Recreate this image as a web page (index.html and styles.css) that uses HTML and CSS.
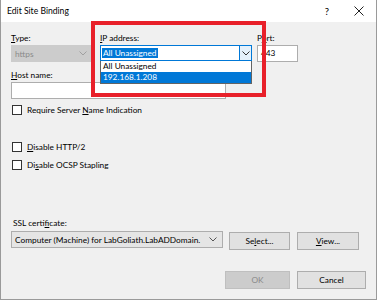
FILE: index.html
```html
<!DOCTYPE html>
<html lang="en">
<head>
    <meta charset="UTF-8">
    <title>Edit Site Binding</title>
    <link rel="stylesheet" href="styles.css">
</head>
<body>
<div class="dialog">
    <div class="titlebar">
        <span class="title">Edit Site Binding</span>
        <span class="help">?</span>
        <span class="close">
            <svg width="10" height="10" viewBox="0 0 10 10"><path d="M0.5 0.5 L9.5 9.5 M9.5 0.5 L0.5 9.5" stroke="#222" stroke-width="1" fill="none"/></svg>
        </span>
    </div>

    <div class="content">
        <div class="top-row">
            <div class="field type-field">
                <label><u>T</u>ype:</label>
                <div class="combo disabled">
                    <span class="combo-text">https</span>
                    <svg class="chev" width="8" height="5" viewBox="0 0 8 5"><path d="M0.5 0.5 L4 4 L7.5 0.5" stroke="#a0a0a0" fill="none"/></svg>
                </div>
            </div>
            <div class="field ip-field">
                <label><u>I</u>P address:</label>
                <div class="combo focused">
                    <span class="combo-text"><span class="selected-text">All Unassigned</span></span>
                    <span class="drop-btn">
                        <svg width="8" height="5" viewBox="0 0 8 5"><path d="M0.5 0.5 L4 4 L7.5 0.5" stroke="#333" fill="none"/></svg>
                    </span>
                </div>
                <div class="droplist">
                    <div class="drop-item">All Unassigned</div>
                    <div class="drop-item active">192.168.1.208</div>
                </div>
            </div>
            <div class="field port-field">
                <label>P<u>o</u>rt:</label>
                <div class="textbox">443</div>
            </div>
        </div>

        <div class="field host-field">
            <label><u>H</u>ost name:</label>
            <div class="textbox"></div>
        </div>

        <div class="check-row sni">
            <span class="checkbox"></span>
            <span>Require Server <u>N</u>ame Indication</span>
        </div>
        <div class="check-row http2">
            <span class="checkbox"></span>
            <span><u>D</u>isable HTTP/2</span>
        </div>
        <div class="check-row ocsp">
            <span class="checkbox"></span>
            <span>Di<u>s</u>able OCSP Stapling</span>
        </div>

        <label class="ssl-label">SSL certi<u>f</u>icate:</label>
        <div class="ssl-row">
            <div class="combo ssl-combo">
                <span class="combo-text">Computer (Machine) for LabGoliath.LabADDomain.</span>
                <svg class="chev" width="8" height="5" viewBox="0 0 8 5"><path d="M0.5 0.5 L4 4 L7.5 0.5" stroke="#555" fill="none"/></svg>
            </div>
            <button class="btn select-btn">Se<u>l</u>ect...</button>
            <button class="btn view-btn"><u>V</u>iew...</button>
        </div>

        <div class="footer">
            <button class="btn ok-btn" disabled>OK</button>
            <button class="btn cancel-btn">Cancel</button>
        </div>
    </div>

    <div class="highlight"></div>
</div>
</body>
</html>
```

FILE: styles.css
```css
body {
    margin: 0;
    font-family: Lato, "Noto Sans", sans-serif;
    font-size: 8.3px;
    color: #000;
    background-color: #fff;
}

.dialog {
    position: relative;
    width: 377px;
    height: 300px;
    box-sizing: border-box;
    background-color: #f0f0f0;
    border-left: 1px solid #9a9a9a;
    border-right: 1px solid #9a9a9a;
    border-bottom: 1px solid #9a9a9a;
    overflow: hidden;
}

.titlebar {
    display: flex;
    align-items: center;
    height: 22px;
    background-color: #fff;
    padding-left: 6px;
}

.title {
    flex: 1;
    font-size: 8.6px;
}

.help {
    width: 34px;
    text-align: center;
    font-size: 9.5px;
}

.close {
    display: flex;
    justify-content: center;
    width: 30px;
    margin-right: 2px;
}

.content {
    padding: 10px 10px 0 10px;
}

label {
    display: block;
    line-height: 12px;
    height: 12px;
}

u {
    text-decoration-thickness: 1px;
    text-underline-offset: 1px;
}

.top-row {
    display: flex;
}

.field label {
    margin-bottom: 1px;
}

.type-field {
    width: 82px;
    margin-right: 7px;
}

.ip-field {
    position: relative;
    width: 152px;
    margin-right: 5px;
}

.port-field {
    width: 41px;
}

.combo {
    display: flex;
    align-items: center;
    height: 17px;
    box-sizing: border-box;
    border: 1px solid #adadad;
    background-color: #e5e5e5;
}

.combo-text {
    flex: 1;
    padding-left: 3px;
    white-space: nowrap;
    overflow: hidden;
}

.chev {
    margin: 0 5px 0 3px;
}

.combo.disabled {
    background-color: #cccccc;
    border-color: #cccccc;
    color: #8a8a8a;
}

.combo.focused {
    background-color: #fff;
    border-color: #0078d7;
    height: 16px;
}

.selected-text {
    background-color: #0078d7;
    color: #fff;
    padding: 0 1px;
    margin-left: -2px;
}

.drop-btn {
    display: flex;
    align-items: center;
    justify-content: center;
    width: 11px;
    height: 100%;
    background-color: #e5f1fb;
    border-left: 1px solid #0078d7;
}

.droplist {
    position: absolute;
    left: 0;
    top: 29px;
    width: 152px;
    box-sizing: border-box;
    background-color: #fff;
    border: 1px solid #646464;
    border-top: none;
    z-index: 2;
}

.drop-item {
    height: 11px;
    line-height: 11px;
    padding-left: 2px;
}

.drop-item.active {
    background-color: #0078d7;
    color: #fff;
}

.textbox {
    height: 17px;
    line-height: 15px;
    box-sizing: border-box;
    border: 1px solid #adadad;
    background-color: #fff;
    padding-left: 3px;
}

.host-field {
    width: 215px;
    margin-top: 7px;
}

.check-row {
    display: flex;
    align-items: center;
    height: 12px;
}

.checkbox {
    width: 10px;
    height: 10px;
    box-sizing: border-box;
    border: 1px solid #333;
    background-color: #fff;
    margin-left: 1px;
    margin-right: 5px;
}

.sni {
    margin-top: 5px;
}

.http2 {
    margin-top: 25px;
}

.ocsp {
    margin-top: 6px;
}

.ssl-label {
    margin-top: 46px;
    margin-left: 2px;
}

.ssl-row {
    display: flex;
    align-items: flex-start;
    margin-top: 2px;
}

.ssl-combo {
    width: 212px;
    margin-right: 6px;
}

.btn {
    height: 18px;
    box-sizing: border-box;
    border: 1px solid #adadad;
    background-color: #e1e1e1;
    font-family: inherit;
    font-size: 8.3px;
    padding: 0;
    color: #000;
}

.select-btn {
    width: 61px;
    margin-top: 1px;
    margin-right: 7px;
}

.view-btn {
    width: 62px;
    margin-top: 1px;
}

.footer {
    display: flex;
    justify-content: flex-end;
    margin-top: 21px;
}

.ok-btn {
    width: 65px;
    margin-right: 7px;
    background-color: #cccccc;
    border-color: #bfbfbf;
    color: #8a8a8a;
}

.cancel-btn {
    width: 69px;
}

.highlight {
    position: absolute;
    left: 90px;
    top: 21px;
    width: 175px;
    height: 76px;
    box-sizing: border-box;
    border: 4px solid #e8202a;
    z-index: 3;
}
```
